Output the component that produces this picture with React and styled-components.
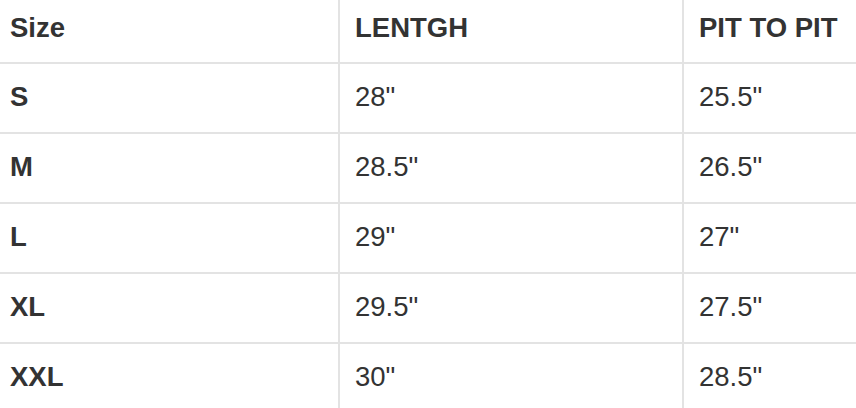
import React from "react";
import styled, { createGlobalStyle } from "styled-components";

const GlobalStyle = createGlobalStyle`
  body {
    margin: 0;
    background: #fff;
    font-family: "Liberation Sans", Arial, Helvetica, sans-serif;
    color: #333;
  }
`;

const rows = [
  { size: "S", length: '28"', pit: '25.5"' },
  { size: "M", length: '28.5"', pit: '26.5"' },
  { size: "L", length: '29"', pit: '27"' },
  { size: "XL", length: '29.5"', pit: '27.5"' },
  { size: "XXL", length: '30"', pit: '28.5"' },
];

function SizeChart() {
  return (
    <Table>
      <Row $head>
        <Cell $first $bold $head>Size</Cell>
        <Cell $bold $head>LENTGH</Cell>
        <Cell $last $bold $head>PIT TO PIT</Cell>
      </Row>
      {rows.map((r) => (
        <Row key={r.size}>
          <Cell $first $bold>{r.size}</Cell>
          <Cell>{r.length}</Cell>
          <Cell $last>{r.pit}</Cell>
        </Row>
      ))}
    </Table>
  );
}

export default function App() {
  return (
    <>
      <GlobalStyle />
      <SizeChart />
    </>
  );
}

const Table = styled.div`
  width: 856px;
  display: flex;
  flex-direction: column;
`;

const Row = styled.div`
  display: grid;
  grid-template-columns: 340px 344px 1fr;
  height: ${(p) => (p.$head ? "64px" : "70px")};
  box-sizing: border-box;
  border-bottom: 2px solid #e3e3e3;
  flex-shrink: 0;
`;

const Cell = styled.div`
  box-sizing: border-box;
  padding-left: ${(p) => (p.$first ? "10px" : "15px")};
  padding-top: ${(p) => (p.$head ? "12px" : "17px")};
  border-right: ${(p) => (p.$last ? "none" : "2px solid #e3e3e3")};
  font-size: 27.5px;
  line-height: 31px;
  font-weight: ${(p) => (p.$bold ? 700 : 400)};
  white-space: nowrap;
`;
